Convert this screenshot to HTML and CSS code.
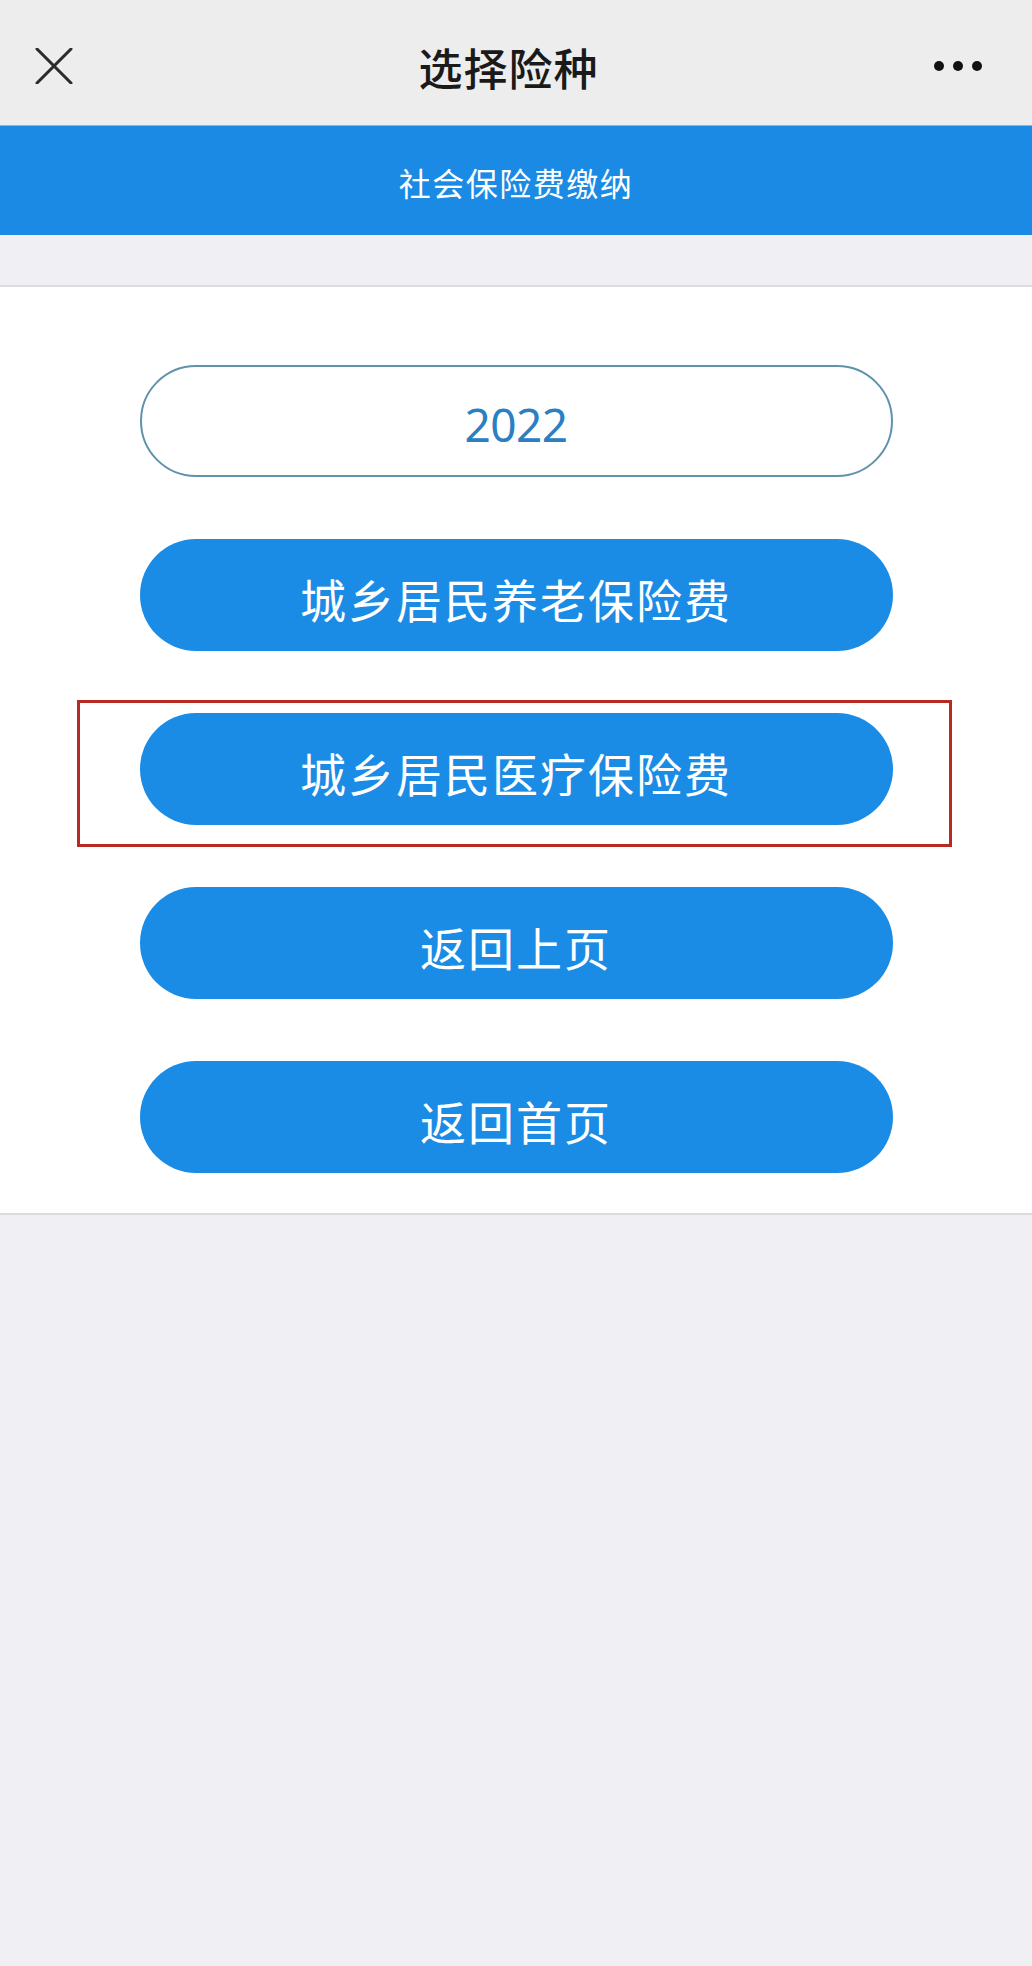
FILE: index.html
```html
<!DOCTYPE html>
<html lang="zh-CN">
<head>
<meta charset="utf-8">
<title>选择险种</title>
<link rel="stylesheet" href="styles.css">
</head>
<body>
<header class="navbar">
  <span class="nav-close" aria-label="关闭">
    <svg width="38" height="36" viewBox="0 0 38 36"><path d="M2 1 L36 35 M36 1 L2 35" stroke="#2b2b2b" stroke-width="3" stroke-linecap="round" fill="none"/></svg>
  </span>
  <h1 class="nav-title">选择险种</h1>
  <span class="nav-more" aria-label="更多"><i></i><i></i><i></i></span>
</header>
<div class="banner">社会保险费缴纳</div>
<div class="spacer"></div>
<main class="card">
  <div class="pill pill-year">2022</div>
  <div class="pill pill-btn">城乡居民养老保险费</div>
  <div class="highlight">
    <div class="pill pill-btn">城乡居民医疗保险费</div>
  </div>
  <div class="pill pill-btn">返回上页</div>
  <div class="pill pill-btn">返回首页</div>
</main>
</body>
</html>
```
FILE: styles.css
```css
html, body {
  margin: 0;
  padding: 0;
}
body {
  background: #efeff4;
  font-family: "Noto Sans CJK SC", "Noto Sans", sans-serif;
  min-height: 1966px;
}
.navbar {
  height: 125px;
  background: #ededed;
  display: flex;
  align-items: center;
  justify-content: space-between;
  padding: 0 50px 0 35px;
  box-sizing: border-box;
}
.nav-close {
  width: 38px;
  height: 36px;
  display: flex;
  margin-top: 7px;
}
.nav-title {
  margin: 0;
  font-size: 44px;
  font-weight: 500;
  color: #1a1a1a;
  letter-spacing: 1px;
  margin-top: 9px;
  margin-left: 10px;
}
.nav-more {
  display: flex;
  gap: 9px;
  margin-top: 7px;
}
.nav-more i {
  width: 10px;
  height: 10px;
  border-radius: 50%;
  background: #111;
}
.banner {
  height: 110px;
  background: #1a8ae4;
  color: #fff;
  font-size: 32px;
  letter-spacing: 1.5px;
  display: flex;
  align-items: center;
  justify-content: center;
  border-top: 1px solid #6cc0f5;
  box-sizing: border-box;
  padding-top: 2px;
}
.spacer {
  height: 50px;
}
.card {
  background: #fff;
  border-top: 2px solid #dcdcdf;
  border-bottom: 2px solid #dcdcdf;
  padding: 78px 0 40px;
  display: flex;
  flex-direction: column;
  align-items: center;
  gap: 62px;
}
.pill {
  width: 753px;
  height: 112px;
  border-radius: 56px;
  box-sizing: border-box;
  display: flex;
  align-items: center;
  justify-content: center;
  padding-top: 6px;
}
.pill-year {
  border: 2px solid #5f93ab;
  color: #2a80c0;
  font-size: 46px;
  font-family: "Noto Sans", "Noto Sans CJK SC", sans-serif;
  letter-spacing: -0.5px;
}
.pill-btn {
  background: #1a8ce5;
  color: #fff;
  font-size: 46px;
  letter-spacing: 2px;
}
.highlight {
  position: relative;
}
.highlight::after {
  content: "";
  position: absolute;
  top: -13px;
  bottom: -22px;
  left: -63px;
  right: -59px;
  border: 3.5px solid #b52b22;
  pointer-events: none;
}
```
